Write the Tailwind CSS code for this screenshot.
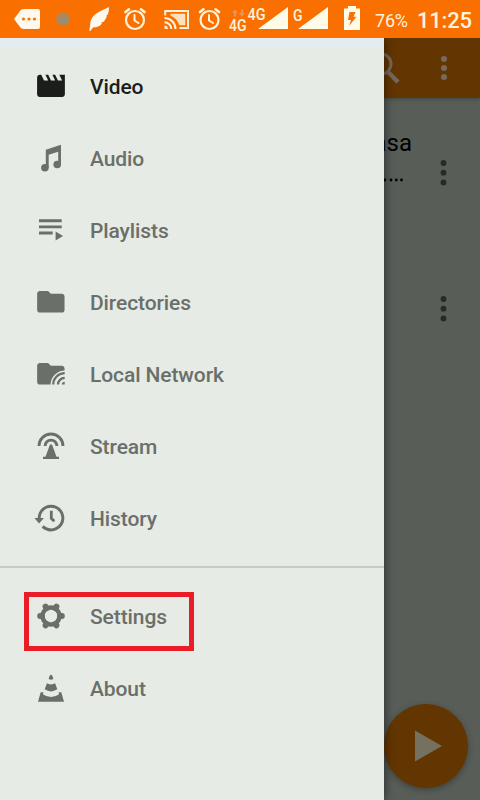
<!DOCTYPE html>
<html lang="en">
<head>
<meta charset="utf-8">
<title>Media player</title>
<script src="https://cdn.jsdelivr.net/npm/@tailwindcss/browser@4"></script>
</head>
<body class="w-[480px] h-[800px] overflow-hidden bg-[#585d58] font-['Roboto',sans-serif]">
<div class="relative w-[480px] h-[800px] flex flex-col overflow-hidden">

  <!-- Status bar -->
  <header class="h-[38px] shrink-0 bg-[#fa7000] flex items-center text-[#fff3dd] relative z-20">
    <svg class="ml-[14px] shrink-0" width="26" height="38" viewBox="0 0 26 38"><path fill="#fff8ee" d="M0 19 6 11Q7 9 10 9H24Q26 9 26 11V27Q26 29 24 29H10Q7 29 6 27Z"/><g fill="#fa7000"><circle cx="9.5" cy="19" r="1.600"/><circle cx="15" cy="19" r="1.600"/><circle cx="20.500" cy="19" r="1.600"/></g></svg>
    <svg class="ml-[16px] shrink-0" width="14" height="38" viewBox="0 0 14 38"><circle cx="7" cy="19.200" r="6.800" fill="#a88a62"/><circle cx="7.500" cy="19.200" r="3" fill="#9a8d70"/></svg>
    <svg class="ml-[19px] shrink-0" width="20" height="38" viewBox="0 0 20 38"><path fill="#fff8ee" d="M20 7C14 10 6 13 3 18 0.500 22 1.800 25 0.200 30.500L1.300 31 4 27.500C8 27.500 11 26 13 23.500L12 22.800 15 21.500 18 16.500 17 16.200 19 14C19.700 12 20 10 20 7Z"/></svg>
    <svg class="ml-[15px] shrink-0" width="22" height="38" viewBox="0 0 22 38" fill="none" stroke="#fff3dd" stroke-linecap="round"><circle cx="11" cy="20" r="9" stroke-width="2.200"/><path stroke-width="2" d="M10.500 15V20.500L14.500 23"/><path stroke-width="2.600" d="M1.500 12 5 9.300M20.500 12 17 9.300"/></svg>
    <svg class="ml-[18px] shrink-0" width="25" height="38" viewBox="0 0 25 38" fill="none" stroke="#fff3dd" stroke-width="2"><path d="M1.200 15.500V11H24V28H15.500"/><path d="M.5 18A11 11 0 0 1 11.500 29M.5 22.200A6.800 6.800 0 0 1 7.300 29"/><path fill="#fff3dd" stroke="none" d="M0.500 25.500A3.500 3.500 0 0 1 4 29H.5ZM6.500 13.800H21.300V25.200H15.300Q13 18 6.500 15.800Z" fill-opacity=".85"/></svg>
    <svg class="ml-[9px] shrink-0" width="23" height="38" viewBox="0 0 23 38" fill="none" stroke="#fff3dd" stroke-linecap="round"><circle cx="11.500" cy="20" r="9" stroke-width="2.200"/><path stroke-width="2" d="M11 15V20.500L15 23"/><path stroke-width="2.600" d="M2 12 5.500 9.300M21 12 17.500 9.300"/></svg>
    <svg class="ml-[8px] shrink-0 font-['Roboto',sans-serif] font-medium" width="60" height="38" viewBox="0 0 60 38" fill="#fff3dd"><path fill="#e8935a" d="M3 12.500 6 9.500 9 12.500H7.200V16.500H4.800V12.500ZM10 13H11.800V9.500H14.200V13H16L13 16.500Z"/><text x="0" y="30.500" font-size="16" textLength="17.500" lengthAdjust="spacingAndGlyphs">4G</text><text x="18.500" y="20.200" font-size="16" textLength="18" lengthAdjust="spacingAndGlyphs">4G</text><path fill="#fffbe9" d="M59 7V29H29Z"/></svg>
    <svg class="ml-[4px] shrink-0 font-['Roboto',sans-serif] font-medium" width="36" height="38" viewBox="0 0 36 38" fill="#fff3dd"><text x="0" y="20.500" font-size="16" textLength="9.500" lengthAdjust="spacingAndGlyphs">G</text><path fill="#fffbe9" d="M35 7V29H5Z"/></svg>
    <svg class="ml-[15px] shrink-0" width="16" height="38" viewBox="0 0 16 38"><path fill="#fffbe9" d="M4 6H12V8.500H16V30H0V8.500H4Z"/><path fill="#fa7000" d="M5.500 12H11.500L9.500 16.700H12.500L5 26 7 20H4Z"/></svg>
    <span class="ml-[15px] w-[42px] text-[18px] leading-none pt-[3px] whitespace-nowrap tracking-[-0.2px]">76%</span>
    <span class="text-[22px] font-medium leading-none pt-[3px] whitespace-nowrap tracking-[-0.2px]">11:25</span>
  </header>

  <!-- Drawer over the dimmed content -->
  <div class="flex flex-1">
    <nav class="w-[384px] h-[762px] shrink-0 bg-[#e6ebe5] text-[#6b6f6a] text-[21px] tracking-[-0.1px] font-medium border-t-[10px] border-[#e5ecef] z-10 shadow-[2px_0_8px_rgba(0,0,0,0.4)] pt-[3px] [&_span]:pt-[2px]">
      <a class="flex items-center h-[72px] pl-[34px] gap-[22px] text-[#1b1d1b]"><svg width="34" height="34" viewBox="0 0 34 34" fill="currentColor"><path transform="translate(.3 -.7) scale(1.39)" d="M18 4l2 4h-3l-2-4h-2l2 4h-3l-2-4H8l2 4H7L5 4H4c-1.100 0-1.990.9-1.990 2L2 18c0 1.100.9 2 2 2h16c1.100 0 2-.9 2-2V4h-4z"/></svg><span>Video</span></a>
      <a class="flex items-center h-[72px] pl-[34px] gap-[22px]"><svg width="34" height="34" viewBox="0 0 34 34" fill="currentColor"><circle cx="10.900" cy="25.700" r="3.800"/><circle cx="23.200" cy="22.500" r="3.800"/><path d="M11.800 7.800 27 2.700V22.500H24.200V9.800L14.700 12.800V25.700H11.800Z"/></svg><span>Audio</span></a>
      <a class="flex items-center h-[72px] pl-[34px] gap-[22px]"><svg width="34" height="34" viewBox="0 0 34 34" fill="currentColor"><path d="M5 5.300H27.700V8.200H5ZM5 11.400H27.700V14.300H5ZM5 17.600H18.700V20.500H5ZM21.600 17.600 29 22 21.600 26.400Z"/></svg><span>Playlists</span></a>
      <a class="flex items-center h-[72px] pl-[34px] gap-[22px]"><svg width="34" height="34" viewBox="0 0 34 34" fill="currentColor"><path transform="translate(.4 -.4) scale(1.37 1.350)" d="M10 4H4c-1.100 0-1.990.9-1.990 2L2 18c0 1.100.9 2 2 2h16c1.100 0 2-.9 2-2V8c0-1.100-.9-2-2-2h-8l-2-2z"/></svg><span>Directories</span></a>
      <a class="flex items-center h-[72px] pl-[34px] gap-[22px]"><svg width="34" height="34" viewBox="0 0 34 34" fill="currentColor"><path transform="translate(.4 -.4) scale(1.37 1.350)" d="M10 4H4c-1.100 0-1.990.9-1.990 2L2 18c0 1.100.9 2 2 2h16c1.100 0 2-.9 2-2V8c0-1.100-.9-2-2-2h-8l-2-2z"/><path fill="#e6ebe5" d="M16.500 27A14.500 14.500 0 0 1 31 12.500V27Z"/><path fill="none" stroke="currentColor" stroke-width="2.200" d="M19.200 26.600A11.500 11.500 0 0 1 30.700 15.100M24 26.600A6.700 6.700 0 0 1 30.700 19.900"/><path d="M27.800 26.600A3 3 0 0 1 30.700 23.800V26.600Z"/></svg><span>Local Network</span></a>
      <a class="flex items-center h-[72px] pl-[34px] gap-[22px]"><svg width="34" height="34" viewBox="0 0 34 34" fill="currentColor"><path fill="none" stroke="currentColor" stroke-width="2.900" d="M5 16A12 12 0 0 1 29 16M11.100 16A5.900 5.900 0 0 1 22.900 16"/><path d="M16 14.500H18L22.500 26.700H25V29H9V26.700H11.500Z"/></svg><span>Stream</span></a>
      <a class="flex items-center h-[72px] pl-[34px] gap-[22px]"><svg width="34" height="34" viewBox="0 0 34 34" fill="currentColor"><path transform="translate(-2.200 -1.700) scale(1.480)" d="M13 3c-4.970 0-9 4.030-9 9H1.800l3.090 3.600L8.200 12H6c0-3.870 3.130-7 7-7s7 3.130 7 7-3.130 7-7 7c-1.930 0-3.680-.79-4.940-2.060l-1.420 1.420C8.270 19.990 10.510 21 13 21c4.970 0 9-4.030 9-9s-4.030-9-9-9z"/><path fill="none" stroke="currentColor" stroke-width="2.800" d="M17.300 8.700V16.300L20.300 19.300"/></svg><span>History</span></a>
      <div class="h-[2px] mt-[11px] mb-[13px] bg-[#c7cbc8]"></div>
      <a class="flex items-center h-[72px] pl-[34px] gap-[22px]"><svg width="34" height="34" viewBox="0 0 34 34" fill="none" stroke="currentColor"><circle cx="17" cy="16" r="8.500" stroke-width="4.400"/><path stroke-width="6" stroke-linecap="round" d="M26 16H27.800M8 16H6.200M21.500 8.200 22.400 6.650M12.500 8.200 11.600 6.650M21.500 23.800 22.400 25.350M12.500 23.800 11.600 25.350"/></svg><span>Settings</span></a>
      <a class="flex items-center h-[72px] pl-[34px] gap-[22px]"><svg width="34" height="34" viewBox="0 0 34 34" fill="currentColor"><path d="M15.800 3.500Q17 2 18.200 3.500L19.400 6.800Q17 8.600 14.600 6.800ZM12.900 11.300Q17 13.500 21.100 11.300L23.300 17.300Q17 21.500 10.700 17.300ZM6.700 20.300H9.500L8.900 22.200Q17 28 25.100 22.200L24.500 20.300H27.300L30 29.700H4Z"/></svg><span>About</span></a>
    </nav>

    <main class="w-[96px] h-[762px] flex flex-col bg-[#585d58] text-black">
      <div class="h-[60px] shrink-0 bg-[#633500] shadow-[0_1px_4px_rgba(0,0,0,0.25)]">
        <svg width="96" height="60" viewBox="0 0 96 60"><circle cx="-3" cy="26" r="10" fill="none" stroke="#72685b" stroke-width="3"/><path d="M3.500 33.500 14 44" stroke="#72685b" stroke-width="4.500"/><g fill="#776a5a"><circle cx="60" cy="21" r="3"/><circle cx="60" cy="30" r="3"/><circle cx="60" cy="39" r="3"/></g></svg>
      </div>
      <div class="h-[136px] flex">
        <div class="w-[28px] shrink-0 pt-[31px] flex flex-col items-end text-[24px] leading-[28px]"><span>asa</span><svg class="-mt-[1px]" width="28" height="34" viewBox="0 0 28 34"><circle cx=".8" cy="24" r="1.400"/><circle cx="7" cy="24" r="1.400"/><circle cx="12.300" cy="24" r="1.400"/><circle cx="17.500" cy="24" r="1.400"/></svg></div>
        <svg class="mt-[60px] ml-[27px]" width="10" height="30" viewBox="0 0 10 30" fill="#252a26"><circle cx="4.500" cy="5" r="2.900"/><circle cx="4.500" cy="14.700" r="2.900"/><circle cx="4.500" cy="24.400" r="2.900"/></svg>
      </div>
      <div class="flex-1"><svg class="mt-[60px] ml-[55px]" width="10" height="30" viewBox="0 0 10 30" fill="#252a26"><circle cx="4.500" cy="5" r="2.900"/><circle cx="4.500" cy="14.700" r="2.900"/><circle cx="4.500" cy="24.400" r="2.900"/></svg></div>
      <div class="mb-[12px] w-[84px] h-[84px] rounded-full bg-[#633500] shadow-[0_2px_6px_rgba(0,0,0,0.3)]"><svg width="84" height="84" viewBox="0 0 84 84"><path fill="#75705f" d="M31 26.500V57.500L58 42Z"/></svg></div>
    </main>
  </div>

  <!-- Highlight around the Settings entry -->
  <div class="absolute left-[24px] top-[592px] w-[170px] h-[59px] border-[5px] border-[#e91d25] z-20"></div>
</div>
</body>
</html>
